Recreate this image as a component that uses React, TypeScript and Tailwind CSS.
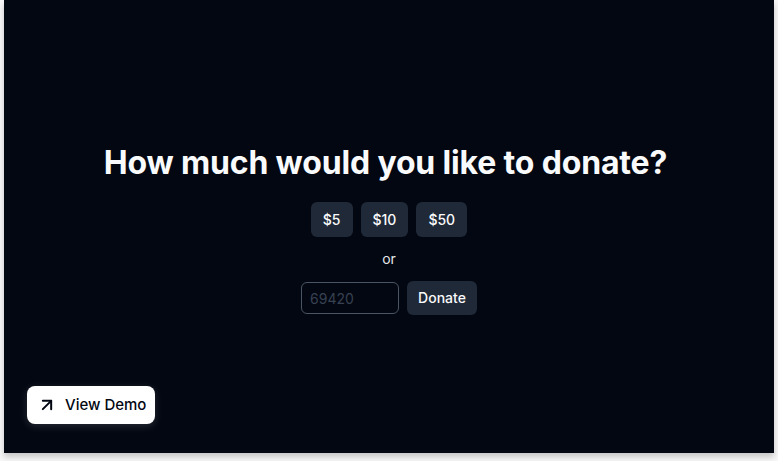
import { ArrowUpRight } from "lucide-react";

export default function App() {
  const amounts = ["$5", "$10", "$50"];

  return (
    <div className="min-h-[461px] w-full bg-[#f7f7f8] px-1" style={{ fontFamily: "Inter, 'Noto Sans', sans-serif" }}>
      <div className="relative flex h-[453px] flex-col items-center justify-center bg-[#030712] pt-[5px] shadow-[0_4px_6px_rgba(0,0,0,0.2)]">
        <h1 className="-ml-[7px] text-[32px] font-bold leading-10 tracking-[-0.005em] text-[#f9fafb]">
          How much would you like to donate?
        </h1>

        <div className="mt-[19px] flex gap-2">
          {amounts.map((a) => (
            <button
              key={a}
              className="h-[35px] rounded-md bg-[#1f2937] px-3 text-sm font-medium text-[#f9fafb]"
            >
              {a}
            </button>
          ))}
        </div>

        <p className="mt-[12px] text-sm text-[#e5e7eb]">or</p>

        <div className="mt-[12px] flex items-center gap-2">
          <input
            placeholder="69420"
            className="h-8 w-[98px] rounded-md border border-[#4b5563] bg-transparent px-2 text-sm text-white outline-none placeholder:text-[#374151]"
          />
          <button className="h-[34px] rounded-md bg-[#1f2937] px-[11px] text-sm font-medium text-[#f9fafb]">
            Donate
          </button>
        </div>

        <button className="absolute bottom-[29px] left-[23px] flex h-[38px] w-[128px] items-center gap-[8px] whitespace-nowrap rounded-lg bg-white pl-[10px] text-[15px] font-medium text-[#030712] shadow-[0_2px_8px_rgba(255,255,255,0.15)]">
          <ArrowUpRight size={20} strokeWidth={2.4} />
          View Demo
        </button>
      </div>
    </div>
  );
}
